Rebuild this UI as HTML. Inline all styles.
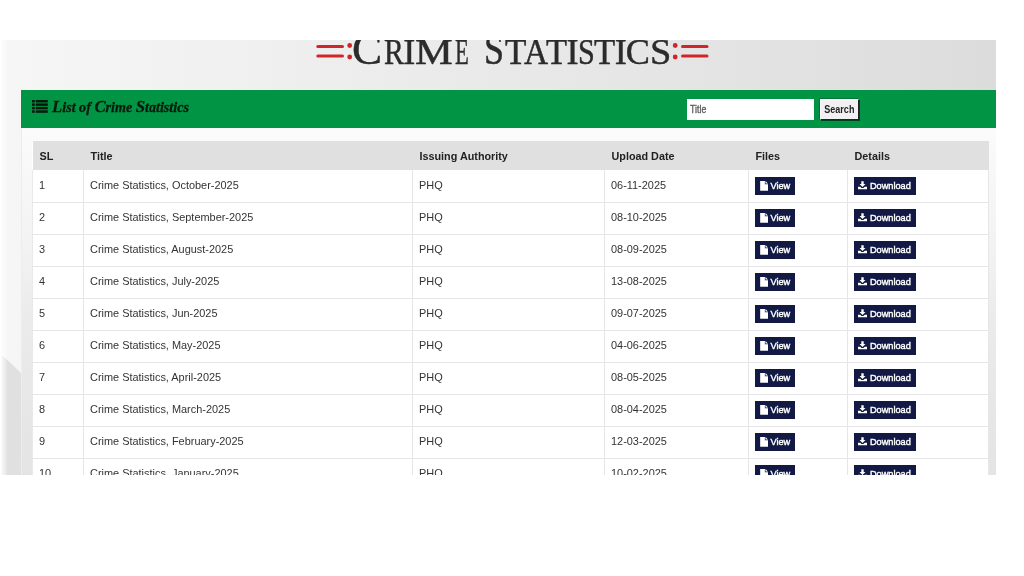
<!DOCTYPE html>
<html lang="en">
<head>
<meta charset="utf-8">
<title>Crime Statistics</title>
<style>
*{box-sizing:border-box}
html,body{margin:0;padding:0;background:#fff}
body{width:1024px;height:576px;overflow:hidden;position:relative;font-family:"Liberation Sans",Arial,sans-serif}
#shot{position:absolute;left:2px;top:40px;width:994px;height:435px;overflow:hidden;will-change:transform;
  background:linear-gradient(to right,#f6f6f6 0%,#f0f0f0 25%,#e9e9e9 50%,#e3e3e3 75%,#dcdcdc 100%)}
#leftfade{position:absolute;left:0;top:0;width:6px;height:435px;background:linear-gradient(to right,rgba(255,255,255,.75),rgba(255,255,255,0))}
#pre{position:absolute;left:1px;top:40px;width:1px;height:435px;background:#fbfbfb}
#lshape{position:absolute;left:0;top:300px;width:19px;height:140px;background:#e0e0e0;
  clip-path:polygon(0 15px,19px 33px,19px 140px,0 140px)}
#heading{position:absolute;left:0;top:0;width:994px;height:50px;color:#2b2b2b;font-family:"Liberation Serif",serif;white-space:nowrap}
#heading .t{position:absolute;left:0;top:-12.7px;width:994px;font-size:36.2px;line-height:1;white-space:nowrap;-webkit-text-stroke:.45px #2b2b2b}
#heading .t span{display:inline-block;transform-origin:0 100%}
#heading .t .g{font-size:45.2px}
.deco{position:absolute;top:0;left:0}
#bar{position:absolute;left:19px;top:50px;width:975px;height:38px;background:#009444}
#bar h3{position:absolute;left:31px;top:0;margin:0;font-family:"Liberation Serif",serif;font-style:italic;font-weight:bold;font-size:14.1px;line-height:34px;color:#0a1a0e;-webkit-text-stroke:.3px #0a1a0e;white-space:nowrap}
#bar h3 b{font-size:16.8px;line-height:1}
#bar svg.ic{position:absolute;left:11px;top:10px}
#q{position:absolute;left:666px;top:9px;width:127px;height:21px;background:#fff;border:0;font-size:11px;line-height:20.5px;color:#5a5a5a;padding-left:2.6px;-webkit-text-stroke:.35px #5a5a5a}
#q span{display:inline-block;transform:scaleX(.8);transform-origin:0 50%}
#btn{position:absolute;left:799px;top:9px;width:39px;height:21px;background:#f3f0f3;border:1px solid;border-color:#fff #222 #222 #fff;box-shadow:1px 1px 0 rgba(0,0,0,.55),-1px -1px 0 rgba(0,40,20,.3);font-size:11px;font-weight:bold;line-height:19px;color:#222;text-align:center;white-space:nowrap}
#btn span{display:inline-block;transform:scaleX(.82);transform-origin:50% 50%}
#panel{position:absolute;left:19px;top:88px;width:975px;height:347px;background:linear-gradient(to bottom,#fbfbfb 0,#f2f2f2 122px,#ebebeb 192px,#e6e6e6 292px,#e4e4e4 347px);border-left:1px solid #ededed}
table{position:absolute;left:10px;top:13px;width:956px;border-collapse:collapse;background:#fff;table-layout:fixed;font-size:10.93px;color:#333}
th{background:#e0e0e0;height:29px;font-size:10.8px;text-align:left;padding:0 0 0 7px;font-weight:bold;color:#222;border:0}
td{height:32px;padding:0 0 2px 6px;border:1px solid #e6e6e6;border-top:0;vertical-align:middle}
tr td:first-child{border-left:1px solid #e9e9e9}
.b{display:inline-block;height:17.5px;line-height:17px;background:#111944;color:#fff;font-size:9.2px;white-space:nowrap;vertical-align:middle;position:relative;top:1px;padding-top:1px;-webkit-text-stroke:.4px #fff}
.b svg{vertical-align:-.5px;margin-right:2.7px}
.v svg{vertical-align:-1.5px}
.v{width:40px;padding-left:4.6px;margin-left:0}
.d{width:62px;padding-left:4.8px;margin-left:-.5px}
</style>
</head>
<body>
<div id="pre"></div>
<div id="shot">
  <div id="lshape"></div>
  <div id="heading">
    <svg class="deco" width="994" height="50" viewBox="0 0 994 50">
      <g stroke="#d0262b" stroke-width="3" stroke-linecap="round">
        <line x1="315.8" y1="6.5" x2="340.5" y2="6.5"/><line x1="315.8" y1="15.9" x2="340.5" y2="15.9"/>
        <line x1="680.5" y1="6.5" x2="705" y2="6.5"/><line x1="680.5" y1="15.9" x2="705" y2="15.9"/>
      </g>
      <g fill="#d0262b">
        <circle cx="347.7" cy="5.5" r="2.4"/><circle cx="347.7" cy="17" r="2.4"/>
        <circle cx="673.2" cy="5.5" r="2.4"/><circle cx="673.2" cy="17" r="2.4"/>
      </g>
    </svg>
    <div class="t"><span class="g" style="margin-left:350.03px;">C</span><span style="margin-left:1.96px;transform:scaleX(0.824);">R</span><span style="margin-left:-5.13px;">I</span><span style="margin-left:-0.43px;transform:scaleX(1.173);">M</span><span style="margin-left:8.39px;transform:scaleX(0.623);">E</span> <span class="g" style="margin-left:-2.32px;transform:scaleX(0.797);">S</span><span style="margin-left:-4.46px;transform:scaleX(0.968);">T</span><span style="margin-left:-2.80px;transform:scaleX(0.921);">A</span><span style="margin-left:-4.14px;transform:scaleX(0.954);">T</span><span style="margin-left:-1.73px;">I</span><span style="margin-left:-1.03px;transform:scaleX(0.834);">S</span><span style="margin-left:-3.54px;transform:scaleX(0.959);">T</span><span style="margin-left:-1.73px;">I</span><span style="margin-left:-0.88px;">C</span><span style="margin-left:-0.15px;transform:scaleX(1.060);">S</span></div>
  </div>
  <div id="bar">
    <svg class="ic" width="15.8" height="12.8" viewBox="0 0 17 13.7" preserveAspectRatio="none"><g fill="#03180a"><rect x="0" y="0" width="3" height="2.6"/><rect x="4" y="0" width="13" height="2.6"/><rect x="0" y="3.7" width="3" height="2.6"/><rect x="4" y="3.7" width="13" height="2.6"/><rect x="0" y="7.4" width="3" height="2.6"/><rect x="4" y="7.4" width="13" height="2.6"/><rect x="0" y="11.1" width="3" height="2.6"/><rect x="4" y="11.1" width="13" height="2.6"/></g></svg>
    <h3><b>L</b>ist of <b>C</b>rime <b>S</b>tatistics</h3>
    <div id="q"><span>Title</span></div>
    <div id="btn"><span>Search</span></div>
  </div>
  <div id="panel">
    <table>
      <colgroup><col style="width:51px"><col style="width:329px"><col style="width:192px"><col style="width:144px"><col style="width:99px"><col style="width:141px"></colgroup>
      <tr><th>SL</th><th>Title</th><th>Issuing Authority</th><th>Upload Date</th><th>Files</th><th>Details</th></tr>
      <tr><td>1</td><td>Crime Statistics, October-2025</td><td>PHQ</td><td>06-11-2025</td><td><span class="b v"><svg width="8.2" height="9.8" viewBox="0 0 8 10"><path fill="#fff" d="M0 0h4.8v3.2H8V10H0z M5.4 0L8 2.6H5.4z"/></svg>View</span></td><td><span class="b d"><svg width="9" height="8.6" viewBox="0 0 10 9"><path fill="#fff" d="M3.7 0h2.6v3H8.3L5 6.3 1.7 3H3.7z M0 6h2.4l1.6 1.6h2L7.6 6H10v3H0z"/></svg>Download</span></td></tr>
      <tr><td>2</td><td>Crime Statistics, September-2025</td><td>PHQ</td><td>08-10-2025</td><td><span class="b v"><svg width="8.2" height="9.8" viewBox="0 0 8 10"><path fill="#fff" d="M0 0h4.8v3.2H8V10H0z M5.4 0L8 2.6H5.4z"/></svg>View</span></td><td><span class="b d"><svg width="9" height="8.6" viewBox="0 0 10 9"><path fill="#fff" d="M3.7 0h2.6v3H8.3L5 6.3 1.7 3H3.7z M0 6h2.4l1.6 1.6h2L7.6 6H10v3H0z"/></svg>Download</span></td></tr>
      <tr><td>3</td><td>Crime Statistics, August-2025</td><td>PHQ</td><td>08-09-2025</td><td><span class="b v"><svg width="8.2" height="9.8" viewBox="0 0 8 10"><path fill="#fff" d="M0 0h4.8v3.2H8V10H0z M5.4 0L8 2.6H5.4z"/></svg>View</span></td><td><span class="b d"><svg width="9" height="8.6" viewBox="0 0 10 9"><path fill="#fff" d="M3.7 0h2.6v3H8.3L5 6.3 1.7 3H3.7z M0 6h2.4l1.6 1.6h2L7.6 6H10v3H0z"/></svg>Download</span></td></tr>
      <tr><td>4</td><td>Crime Statistics, July-2025</td><td>PHQ</td><td>13-08-2025</td><td><span class="b v"><svg width="8.2" height="9.8" viewBox="0 0 8 10"><path fill="#fff" d="M0 0h4.8v3.2H8V10H0z M5.4 0L8 2.6H5.4z"/></svg>View</span></td><td><span class="b d"><svg width="9" height="8.6" viewBox="0 0 10 9"><path fill="#fff" d="M3.7 0h2.6v3H8.3L5 6.3 1.7 3H3.7z M0 6h2.4l1.6 1.6h2L7.6 6H10v3H0z"/></svg>Download</span></td></tr>
      <tr><td>5</td><td>Crime Statistics, Jun-2025</td><td>PHQ</td><td>09-07-2025</td><td><span class="b v"><svg width="8.2" height="9.8" viewBox="0 0 8 10"><path fill="#fff" d="M0 0h4.8v3.2H8V10H0z M5.4 0L8 2.6H5.4z"/></svg>View</span></td><td><span class="b d"><svg width="9" height="8.6" viewBox="0 0 10 9"><path fill="#fff" d="M3.7 0h2.6v3H8.3L5 6.3 1.7 3H3.7z M0 6h2.4l1.6 1.6h2L7.6 6H10v3H0z"/></svg>Download</span></td></tr>
      <tr><td>6</td><td>Crime Statistics, May-2025</td><td>PHQ</td><td>04-06-2025</td><td><span class="b v"><svg width="8.2" height="9.8" viewBox="0 0 8 10"><path fill="#fff" d="M0 0h4.8v3.2H8V10H0z M5.4 0L8 2.6H5.4z"/></svg>View</span></td><td><span class="b d"><svg width="9" height="8.6" viewBox="0 0 10 9"><path fill="#fff" d="M3.7 0h2.6v3H8.3L5 6.3 1.7 3H3.7z M0 6h2.4l1.6 1.6h2L7.6 6H10v3H0z"/></svg>Download</span></td></tr>
      <tr><td>7</td><td>Crime Statistics, April-2025</td><td>PHQ</td><td>08-05-2025</td><td><span class="b v"><svg width="8.2" height="9.8" viewBox="0 0 8 10"><path fill="#fff" d="M0 0h4.8v3.2H8V10H0z M5.4 0L8 2.6H5.4z"/></svg>View</span></td><td><span class="b d"><svg width="9" height="8.6" viewBox="0 0 10 9"><path fill="#fff" d="M3.7 0h2.6v3H8.3L5 6.3 1.7 3H3.7z M0 6h2.4l1.6 1.6h2L7.6 6H10v3H0z"/></svg>Download</span></td></tr>
      <tr><td>8</td><td>Crime Statistics, March-2025</td><td>PHQ</td><td>08-04-2025</td><td><span class="b v"><svg width="8.2" height="9.8" viewBox="0 0 8 10"><path fill="#fff" d="M0 0h4.8v3.2H8V10H0z M5.4 0L8 2.6H5.4z"/></svg>View</span></td><td><span class="b d"><svg width="9" height="8.6" viewBox="0 0 10 9"><path fill="#fff" d="M3.7 0h2.6v3H8.3L5 6.3 1.7 3H3.7z M0 6h2.4l1.6 1.6h2L7.6 6H10v3H0z"/></svg>Download</span></td></tr>
      <tr><td>9</td><td>Crime Statistics, February-2025</td><td>PHQ</td><td>12-03-2025</td><td><span class="b v"><svg width="8.2" height="9.8" viewBox="0 0 8 10"><path fill="#fff" d="M0 0h4.8v3.2H8V10H0z M5.4 0L8 2.6H5.4z"/></svg>View</span></td><td><span class="b d"><svg width="9" height="8.6" viewBox="0 0 10 9"><path fill="#fff" d="M3.7 0h2.6v3H8.3L5 6.3 1.7 3H3.7z M0 6h2.4l1.6 1.6h2L7.6 6H10v3H0z"/></svg>Download</span></td></tr>
      <tr><td>10</td><td>Crime Statistics, January-2025</td><td>PHQ</td><td>10-02-2025</td><td><span class="b v"><svg width="8.2" height="9.8" viewBox="0 0 8 10"><path fill="#fff" d="M0 0h4.8v3.2H8V10H0z M5.4 0L8 2.6H5.4z"/></svg>View</span></td><td><span class="b d"><svg width="9" height="8.6" viewBox="0 0 10 9"><path fill="#fff" d="M3.7 0h2.6v3H8.3L5 6.3 1.7 3H3.7z M0 6h2.4l1.6 1.6h2L7.6 6H10v3H0z"/></svg>Download</span></td></tr>
    </table>
  </div>
  <div id="leftfade"></div>
</div>
</body>
</html>
